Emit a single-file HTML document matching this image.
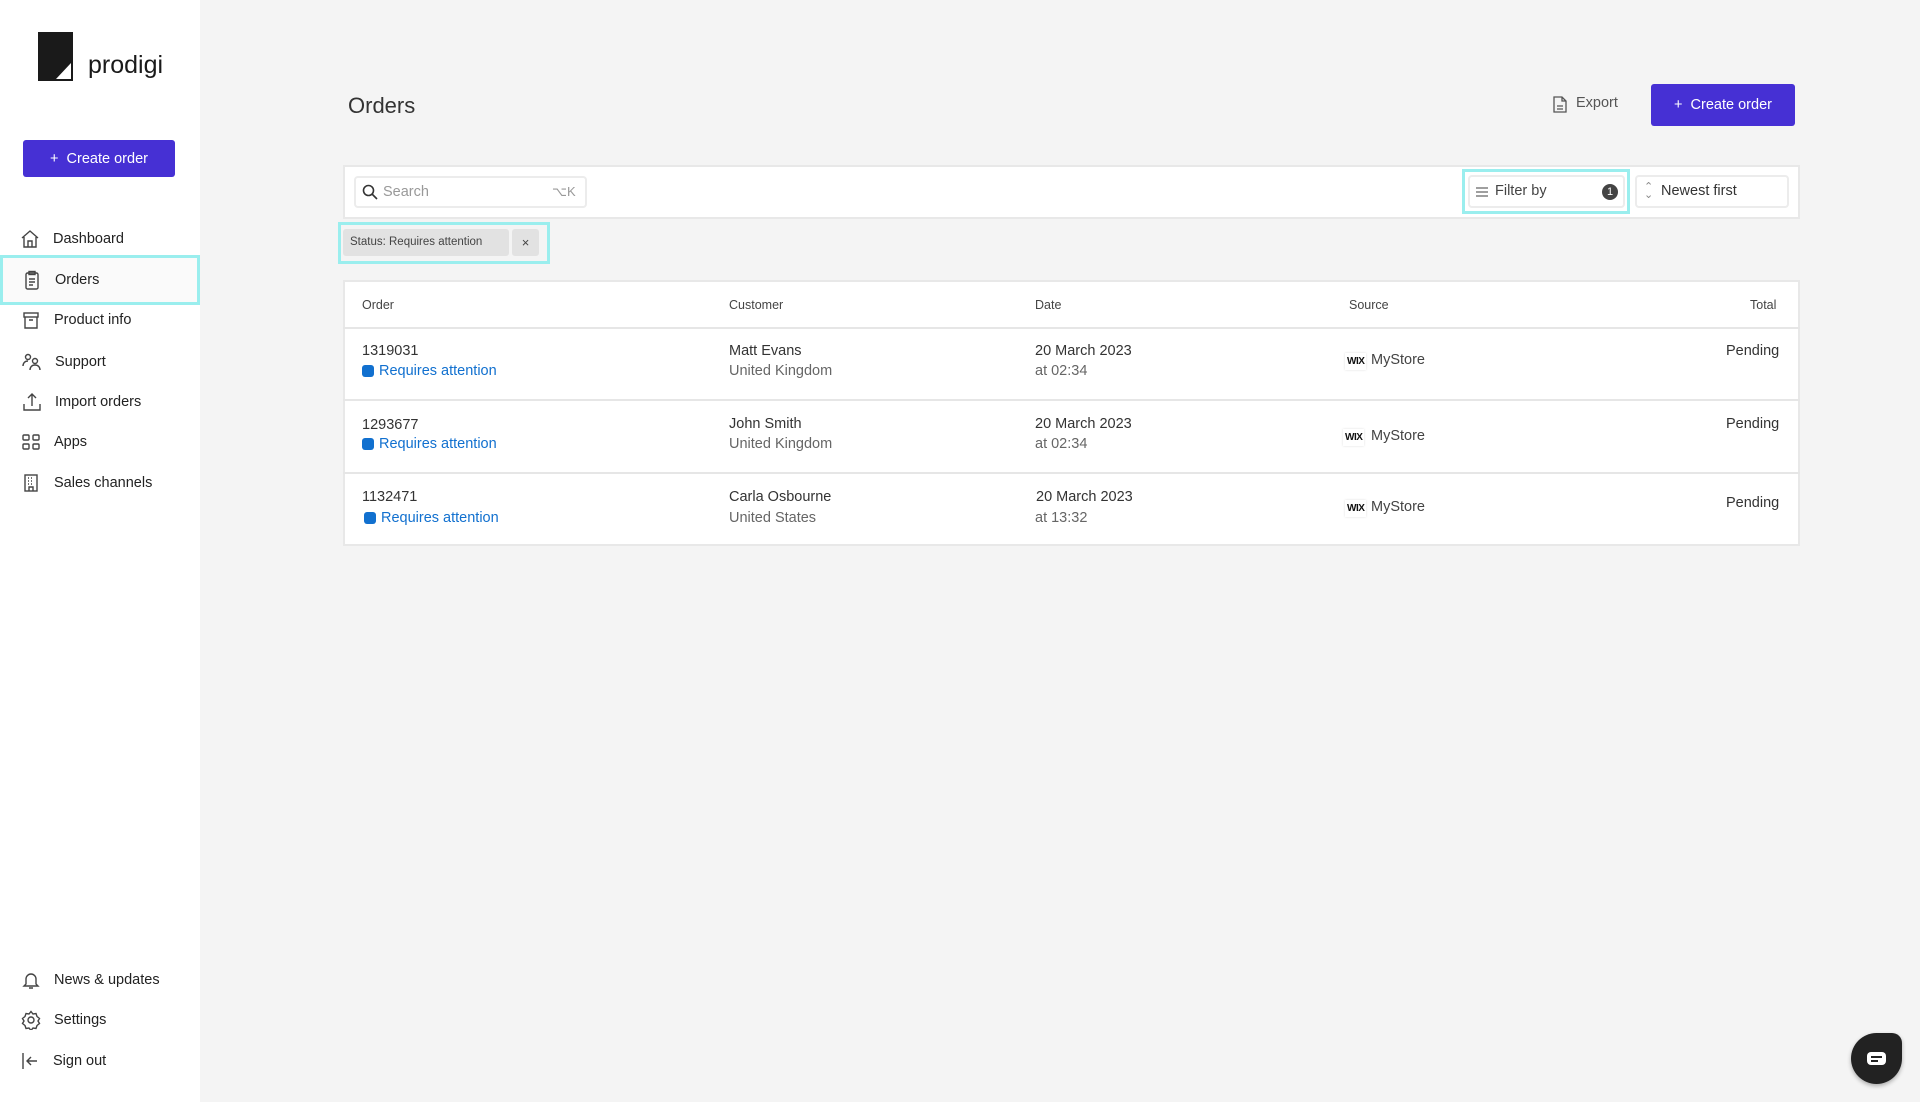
<!DOCTYPE html>
<html><head><meta charset="utf-8"><style>
*{box-sizing:border-box;margin:0;padding:0}
body{width:1920px;height:1102px;background:#f4f4f4;font-family:"Liberation Sans",sans-serif;color:#333;position:relative;overflow:hidden}
.abs{position:absolute}
.side{left:0;top:0;width:200px;height:1102px;background:#fff}
.nav{position:absolute;left:20px;font-size:14.5px;color:#222;display:flex;align-items:center;height:24px}
.nav svg{width:20px;height:20px;margin-right:13px;fill:none;stroke:#444;stroke-width:1.4}
.btn{background:#4630d4;color:#fff;border-radius:3px;display:flex;align-items:center;justify-content:center;font-size:14.5px}
.th{position:absolute;top:298px;font-size:12.5px;color:#444}
.c{position:absolute;font-size:14.5px;color:#333}
.g{color:#666}
.req{position:absolute;font-size:14.5px;color:#1170cf;display:flex;align-items:center}
.req i{display:inline-block;width:12px;height:12px;background:#1170cf;border-radius:3px;margin-right:5px}
.line{position:absolute;left:343px;width:1457px;height:2px;background:#e6e6e6}
.wix{position:absolute;font-size:10px;font-weight:bold;color:#111;background:#fff;box-shadow:0 0 2px #ddd;padding:3px 2px;letter-spacing:-0.5px}
</style></head><body>
<div class="abs side"></div>
<div class="abs" style="left:38px;top:32px;width:35px;height:49px;background:#1a1a1a"></div>
<div class="abs" style="left:56px;top:63px;width:15px;height:16px;background:#fff;clip-path:polygon(100% 0,100% 100%,0 100%)"></div>
<div class="abs" style="left:88px;top:51px;font-size:25px;color:#1a1a1a">prodigi</div>
<div class="abs btn" style="left:23px;top:140px;width:152px;height:37px">+&nbsp; Create order</div>

<div class="abs" style="left:0;top:255px;width:200px;height:50px;border:3px solid #9aeeee;background:#fafafa"></div>
<div class="nav" style="top:227px"><svg viewBox="0 0 20 20"><path d="M2 9L10 2l8 7M4 8v10h12V8M8 18v-6h4v6"/></svg>Dashboard</div>
<div class="nav" style="top:268px;left:22px"><svg viewBox="0 0 20 20"><rect x="4" y="3" width="12" height="16" rx="1.5"/><rect x="7" y="1.5" width="6" height="3"/><path d="M7 9h6M7 12h6M7 15h4"/></svg>Orders</div>
<div class="nav" style="top:308px;left:21px"><svg viewBox="0 0 20 20"><rect x="3" y="3" width="14" height="4"/><path d="M4 7v11h12V7M8 10h4"/></svg>Product info</div>
<div class="nav" style="top:350px;left:22px"><svg viewBox="0 0 20 20"><circle cx="6" cy="5" r="2.5"/><circle cx="13" cy="9" r="2.5"/><path d="M1 14c0-3 2-5 5-5M8 18c0-3 2-5 5-5s5 2 5 5"/></svg>Support</div>
<div class="nav" style="top:390px;left:22px"><svg viewBox="0 0 20 20"><path d="M10 14V2M6 6l4-4 4 4M2 12v6h16v-6"/></svg>Import orders</div>
<div class="nav" style="top:430px;left:21px"><svg viewBox="0 0 20 20"><rect x="2" y="3" width="6" height="5" rx="1"/><rect x="12" y="3" width="6" height="5" rx="1"/><rect x="2" y="12" width="6" height="5" rx="1"/><rect x="12" y="12" width="6" height="5" rx="1"/></svg>Apps</div>
<div class="nav" style="top:471px;left:21px"><svg viewBox="0 0 20 20"><rect x="4" y="2" width="12" height="16"/><path d="M7 5h1M10 5h1M7 8h1M10 8h1M7 11h1M10 11h1M8 18v-4h4v4"/></svg>Sales channels</div>

<div class="nav" style="top:968px;left:21px"><svg viewBox="0 0 20 20"><path d="M5 14V9a5 5 0 0 1 10 0v5l2 2H3zM8 18h4"/></svg>News &amp; updates</div>
<div class="nav" style="top:1008px;left:21px"><svg viewBox="0 0 20 20"><circle cx="10" cy="10" r="3"/><path d="M10 1.5l2 2.5 3-.5 1 3 2.5 2-1.5 2.5 1.5 2.5-2.5 2-1 3-3-.5-2 2.5-2-2.5-3 .5-1-3-2.5-2 1.5-2.5-1.5-2.5 2.5-2 1-3 3 .5z"/></svg>Settings</div>
<div class="nav" style="top:1049px;left:20px"><svg viewBox="0 0 20 20"><path d="M3 2v16M17 10H7M11 6l-4 4 4 4"/></svg>Sign out</div>

<div class="abs" style="left:348px;top:93px;font-size:22px;color:#333">Orders</div>
<svg class="abs" style="left:1553px;top:96px" width="14" height="17" viewBox="0 0 14 17" fill="none" stroke="#555" stroke-width="1.3"><path d="M1 1h8l4 4v11H1z M9 1v4h4M4 10h6M4 13h6"/></svg>
<div class="abs" style="left:1576px;top:95px;font-size:14.5px;color:#555">Export</div>
<div class="abs btn" style="left:1651px;top:84px;width:144px;height:42px">+&nbsp; Create order</div>

<div class="abs" style="left:343px;top:165px;width:1457px;height:54px;background:#fff;border:2px solid #e8e8e8"></div>
<div class="abs" style="left:354px;top:176px;width:233px;height:32px;border:2px solid #ececec;border-radius:4px;background:#fff"></div>
<svg class="abs" style="left:362px;top:184px" width="16" height="16" viewBox="0 0 16 16" fill="none" stroke="#333" stroke-width="1.6"><circle cx="6.5" cy="6.5" r="5"/><path d="M10 10l5 5"/></svg>
<div class="abs" style="left:383px;top:184px;font-size:14.5px;color:#999">Search</div>
<div class="abs" style="left:552px;top:184px;font-size:13px;color:#999">⌥K</div>

<div class="abs" style="left:1462px;top:169px;width:168px;height:45px;border:3px solid #9aeeee"></div>
<div class="abs" style="left:1468px;top:175px;width:157px;height:33px;border:2px solid #ececec;border-radius:4px;background:#fff"></div>
<svg class="abs" style="left:1476px;top:186px" width="12" height="12" viewBox="0 0 12 12" stroke="#666" stroke-width="1.2"><path d="M0 2h12M0 6h12M0 10h12"/></svg>
<div class="abs" style="left:1495px;top:183px;font-size:14.5px;color:#444">Filter by</div>
<div class="abs" style="left:1602px;top:184px;width:16px;height:16px;border-radius:50%;background:#444;color:#fff;font-size:11px;text-align:center;line-height:16px">1</div>
<div class="abs" style="left:1635px;top:175px;width:154px;height:33px;border:2px solid #ececec;border-radius:4px;background:#fff"></div>
<div class="abs" style="left:1644px;top:183px;font-size:11px;color:#888;line-height:8px">⌃<br>⌄</div>
<div class="abs" style="left:1661px;top:183px;font-size:14.5px;color:#333">Newest first</div>

<div class="abs" style="left:338px;top:222px;width:212px;height:42px;border:3px solid #9aeeee"></div>
<div class="abs" style="left:343px;top:229px;width:166px;height:27px;background:#e2e2e2;border-radius:3px;font-size:11.5px;color:#444;line-height:27px;padding-left:7px">Status: Requires attention</div>
<div class="abs" style="left:512px;top:229px;width:27px;height:27px;background:#e2e2e2;border-radius:3px;font-size:13px;color:#444;line-height:27px;text-align:center">×</div>

<div class="abs" style="left:343px;top:280px;width:1457px;height:266px;background:#fff;border:2px solid #e8e8e8"></div>
<div class="line" style="top:327px"></div>
<div class="line" style="top:399px"></div>
<div class="line" style="top:472px"></div>
<div class="th" style="left:362px">Order</div>
<div class="th" style="left:729px">Customer</div>
<div class="th" style="left:1035px">Date</div>
<div class="th" style="left:1349px">Source</div>
<div class="th" style="left:1750px">Total</div>

<div class="c" style="left:362px;top:343px">1319031</div>
<div class="req" style="left:362px;top:363px"><i></i>Requires attention</div>
<div class="c" style="left:729px;top:343px">Matt Evans</div>
<div class="c g" style="left:729px;top:363px">United Kingdom</div>
<div class="c" style="left:1035px;top:343px">20 March 2023</div>
<div class="c g" style="left:1035px;top:363px">at 02:34</div>
<div class="wix" style="left:1345px;top:353px">WIX</div>
<div class="c" style="left:1371px;top:352px;color:#444">MyStore</div>
<div class="c" style="left:1726px;top:343px">Pending</div>

<div class="c" style="left:362px;top:417px">1293677</div>
<div class="req" style="left:362px;top:436px"><i></i>Requires attention</div>
<div class="c" style="left:729px;top:416px">John Smith</div>
<div class="c g" style="left:729px;top:436px">United Kingdom</div>
<div class="c" style="left:1035px;top:416px">20 March 2023</div>
<div class="c g" style="left:1035px;top:436px">at 02:34</div>
<div class="wix" style="left:1343px;top:429px">WIX</div>
<div class="c" style="left:1371px;top:428px;color:#444">MyStore</div>
<div class="c" style="left:1726px;top:416px">Pending</div>

<div class="c" style="left:362px;top:489px">1132471</div>
<div class="req" style="left:364px;top:510px"><i></i>Requires attention</div>
<div class="c" style="left:729px;top:489px">Carla Osbourne</div>
<div class="c g" style="left:729px;top:510px">United States</div>
<div class="c" style="left:1036px;top:489px">20 March 2023</div>
<div class="c g" style="left:1035px;top:510px">at 13:32</div>
<div class="wix" style="left:1345px;top:500px">WIX</div>
<div class="c" style="left:1371px;top:499px;color:#444">MyStore</div>
<div class="c" style="left:1726px;top:495px">Pending</div>

<div class="abs" style="left:1851px;top:1033px;width:51px;height:51px;background:#222;border-radius:50% 10px 50% 50%;box-shadow:0 2px 4px rgba(0,0,0,.3)"></div>
<div class="abs" style="left:1867px;top:1052px;width:19px;height:13px;background:#fff;border-radius:4px"></div>
<div class="abs" style="left:1871px;top:1056px;width:11px;height:2px;background:#222"></div>
<div class="abs" style="left:1871px;top:1060px;width:7px;height:2px;background:#222"></div>
</body></html>
